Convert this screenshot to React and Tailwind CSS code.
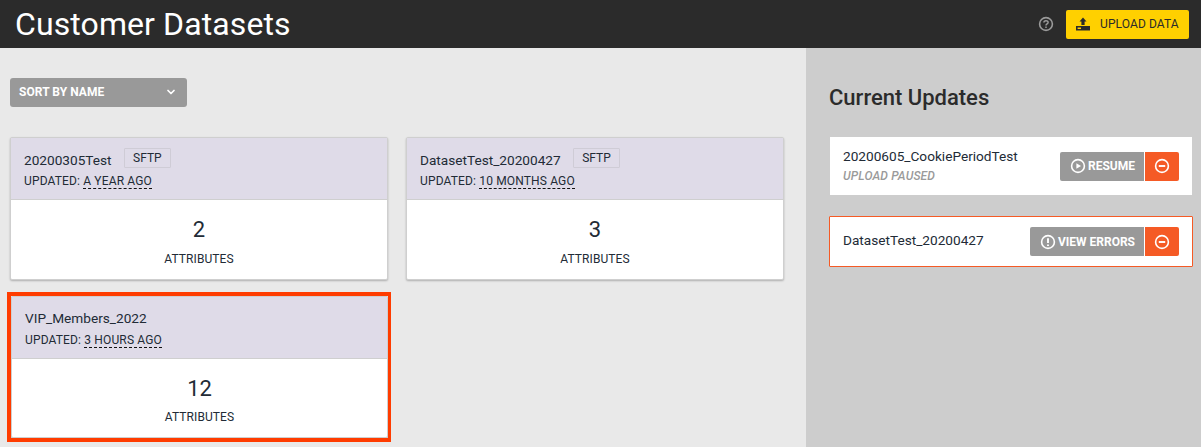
import React from "react";
import { ChevronDown } from "lucide-react";

function UploadIcon() {
  return (
    <svg width="14" height="14" viewBox="0 0 14 14" className="text-[#2b2b2b]">
      <path d="M7 0.5 L10.5 4.5 H8.6 V8 H5.4 V4.5 H3.5 Z" fill="currentColor" />
      <path d="M0 9 H14 V13.5 H0 Z M1.6 10.6 V12 H5 V10.6 Z" fill="currentColor" fillRule="evenodd" />
    </svg>
  );
}

function CircleIcon({ kind }) {
  return (
    <svg width="16" height="16" viewBox="0 0 16 16" fill="none" stroke="currentColor" strokeWidth="1.6">
      <circle cx="8" cy="8" r="6.4" />
      {kind === "play" && <path d="M6.4 5.2 L11 8 L6.4 10.8 Z" fill="currentColor" stroke="none" />}
      {kind === "alert" && <path d="M8 4.2 V9 M8 10.4 V12" strokeWidth="1.9" />}
      {kind === "minus" && <path d="M4.8 8 H11.2" strokeWidth="1.9" />}
      {kind === "help" && (
        <>
          <path d="M5.9 6.5 C5.9 4.2 10.1 4.2 10.1 6.4 C10.1 7.9 8 7.8 8 9.4" strokeWidth="1.5" />
          <path d="M8 10.4 V12" strokeWidth="1.5" />
        </>
      )}
    </svg>
  );
}

function DatasetCard({ name, updated, count, sftp }) {
  return (
    <div className="border border-[#cfcfcf] rounded-[2px] shadow-[0_1px_2px_rgba(0,0,0,0.25)] bg-white text-[#222b36]">
      <div className="bg-[#dfdbe8] border-b border-[#cfcfcf] h-[62px] pl-[13px] pt-[10px]">
        <div className="flex items-start h-[22px]">
          <span className={sftp ? "text-[13.65px] leading-[22px] mt-[1px]" : "text-[13.65px] leading-[22px]"}>{name}</span>
          {sftp && (
            <span className="ml-[12px] border border-[#cfccd6] text-[12px] leading-[18px] px-[8.5px] rounded-[1px]">SFTP</span>
          )}
        </div>
        <div className="text-[12px] leading-[20px] mt-[1px] tracking-[0.15px]">
          UPDATED: <span className="border-b border-dashed border-[#111]">{updated}</span>
        </div>
      </div>
      <div className={sftp ? "h-[79px] text-center" : "h-[78px] text-center"}>
        <div className="text-[22px] leading-[26px] pt-[17px] box-content">{count}</div>
        <div className={sftp ? "text-[12px] leading-[16px] mt-[8px] tracking-[0.1px]" : "text-[12px] leading-[16px] mt-[7px] tracking-[0.1px]"}>ATTRIBUTES</div>
      </div>
    </div>
  );
}

function ActionButtons({ icon, label }) {
  return (
    <div className="flex h-[29px] text-white">
      <button className="flex items-center gap-[2px] bg-[#999999] rounded-l-[2px] pl-[10px] pr-[9px] text-[12px] font-bold">
        <CircleIcon kind={icon} />
        {label}
      </button>
      <button className="flex items-center justify-center w-[34px] ml-px bg-[#f55a25] rounded-r-[2px]">
        <CircleIcon kind="minus" />
      </button>
    </div>
  );
}

export default function App() {
  return (
    <div className="w-[1201px] h-[447px] overflow-hidden flex flex-col bg-[#e9e9e9] font-['Roboto',sans-serif]">
      <header className="h-[48px] shrink-0 bg-[#2b2b2b] flex items-center pl-[15px] pr-[12px]">
        <h1 className="text-[32px] leading-[48px] text-white tracking-[0.1px]">Customer Datasets</h1>
        <div className="ml-auto flex items-center gap-[12px]">
          <span className="text-[#9a9a9a]">
            <CircleIcon kind="help" />
          </span>
          <button className="flex items-center gap-[10px] h-[29px] w-[123px] pl-[10px] bg-[#ffd000] rounded-[2px] text-[12px] text-[#2b2b2b] tracking-[0.1px]">
            <UploadIcon />
            UPLOAD DATA
          </button>
        </div>
      </header>
      <div className="flex flex-1 min-h-0">
        <main className="w-[806px] shrink-0 pl-[10px] pr-[22px] pt-[30px]">
          <button className="flex items-center justify-between w-[177px] h-[29px] pl-[9px] pr-[10px] pb-[1px] bg-[#999999] rounded-[3px] text-white text-[12px] font-bold tracking-[0.05px]">
            SORT BY NAME
            <ChevronDown size={12} strokeWidth={3.5} />
          </button>
          <div className="grid grid-cols-[378px_378px] gap-x-[18px] gap-y-[16px] mt-[30px]">
            <DatasetCard name="20200305Test" updated="A YEAR AGO" count="2" sftp />
            <DatasetCard name="DatasetTest_20200427" updated="10 MONTHS AGO" count="3" sftp />
            <div className="relative ml-px">
              <DatasetCard name="VIP_Members_2022" updated="3 HOURS AGO" count="12" />
              <div className="absolute -left-[4px] -right-[3px] -top-[4px] -bottom-[4px] border-[4px] border-r-[3px] border-[#ff3c00]" />
            </div>
          </div>
        </main>
        <aside className="flex-1 bg-[#cdcdcd] pl-[23px] pr-[8px] pt-[36px]">
          <h2 className="text-[22px] leading-[28px] font-medium text-[#2b2b2b]">Current Updates</h2>
          <div className="mt-[25px] ml-px mr-px h-[58px] bg-white flex items-center justify-between pl-[13px] pr-[13px]">
            <div>
              <div className="text-[13.65px] leading-[20px] text-[#222b36] -mt-[1px] pb-[1px]">20200605_CookiePeriodTest</div>
              <div className="text-[12px] leading-[18px] italic font-medium text-[#9a9a9a] tracking-[0.15px]">UPLOAD PAUSED</div>
            </div>
            <ActionButtons icon="play" label="RESUME" />
          </div>
          <div className="mt-[21px] h-[51px] bg-white border border-[#f55a25] rounded-[1px] flex items-center justify-between pl-[13px] pr-[13px]">
            <div className="text-[13.65px] text-[#222b36] pb-[2px]">DatasetTest_20200427</div>
            <ActionButtons icon="alert" label="VIEW ERRORS" />
          </div>
        </aside>
      </div>
    </div>
  );
}
